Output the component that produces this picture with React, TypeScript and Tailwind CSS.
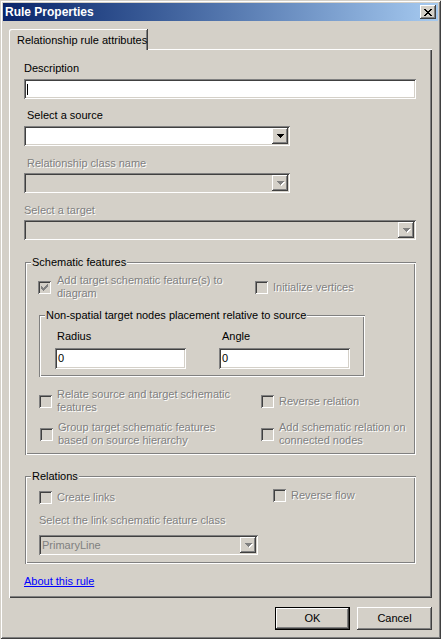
import React from "react";

const raised =
  "shadow-[inset_-1px_-1px_#404040,inset_1px_1px_#fff,inset_-2px_-2px_#808080,inset_2px_2px_#d4d0c8]";
const sunken =
  "shadow-[inset_1px_1px_#808080,inset_-1px_-1px_#fff,inset_2px_2px_#404040,inset_-2px_-2px_#d4d0c8]";
const etched =
  "shadow-[inset_1px_1px_#808080,inset_-1px_-1px_#fff,inset_2px_2px_#fff,inset_-2px_-2px_#808080]";
const dim = "text-[#808080] [text-shadow:1px_1px_0_#fff]";

function Arrow({ disabled }: { disabled?: boolean }) {
  const d = "M0 0h7v1h-1v1h-1v1h-1v1h-1v-1h-1v-1h-1v-1h-1z";
  return (
    <svg width="8" height="5" viewBox="0 0 8 5" shapeRendering="crispEdges">
      {disabled && <path d={d} fill="#fff" transform="translate(1 1)" />}
      <path d={d} fill={disabled ? "#808080" : "#000"} />
    </svg>
  );
}

function Select({
  width,
  disabled,
  value,
}: {
  width: string;
  disabled?: boolean;
  value?: string;
}) {
  return (
    <div
      className={`${width} h-[20px] flex items-center ${sunken} ${
        disabled ? "bg-[#d4d0c8]" : "bg-white"
      }`}
    >
      <span className="flex-1 pl-[3px] text-[#808080]">{value}</span>
      <div
        className={`w-[16px] h-[16px] m-[2px] bg-[#d4d0c8] flex items-center justify-center pl-[1px] ${raised}`}
      >
        <Arrow disabled={disabled} />
      </div>
    </div>
  );
}

function CheckBox({ checked }: { checked?: boolean }) {
  return (
    <div className={`w-[13px] h-[13px] shrink-0 bg-[#d4d0c8] flex items-center justify-center ${sunken}`}>
      {checked && (
        <svg width="7" height="7" viewBox="0 0 7 7" shapeRendering="crispEdges">
          <path
            d="M6 0h1v3h-1v1h-1v1h-1v1h-1v1h-1v-1h-1v-1h-1v-3h1v1h1v1h1v-1h1v-1h1v-1h1z"
            fill="#808080"
          />
        </svg>
      )}
    </div>
  );
}

function Check({
  label,
  checked,
  gap,
  textWidth,
}: {
  label: string;
  checked?: boolean;
  gap: string;
  textWidth?: string;
}) {
  return (
    <div className={`flex items-center ${gap}`}>
      <CheckBox checked={checked} />
      <span className={`${dim} ${textWidth ?? ""}`}>{label}</span>
    </div>
  );
}

function Group({
  title,
  className,
  children,
}: {
  title: string;
  className: string;
  children: React.ReactNode;
}) {
  return (
    <div className={`relative ${etched} ${className}`}>
      <span className="absolute left-[6px] -top-[6px] px-[1px] bg-[#d4d0c8]">{title}</span>
      {children}
    </div>
  );
}

function CloseButton() {
  return (
    <div className={`w-[16px] h-[14px] bg-[#d4d0c8] flex items-center justify-center ${raised}`}>
      <svg width="8" height="7" viewBox="0 0 8 7" shapeRendering="crispEdges">
        <path
          d="M0 0h2v1h-2zM6 0h2v1h-2zM1 1h2v1h-2zM5 1h2v1h-2zM2 2h4v1h-4zM3 3h2v1h-2zM2 4h4v1h-4zM1 5h2v1h-2zM5 5h2v1h-2zM0 6h2v1h-2zM6 6h2v1h-2z"
          fill="#000"
        />
      </svg>
    </div>
  );
}

export default function App() {
  return (
    <div
      className={`w-[441px] h-[639px] bg-[#d4d0c8] p-[3px] flex flex-col font-['Liberation_Sans',Arial,sans-serif] text-[11px] leading-[13px] text-black shadow-[inset_1px_1px_#d4d0c8,inset_-1px_-1px_#404040,inset_2px_2px_#fff,inset_-2px_-2px_#808080]`}
    >
      {/* Title bar */}
      <div className="h-[18px] flex items-center justify-between pl-[2px] pr-[2px] bg-linear-to-r from-[#0a246a] to-[#a6caf0]">
        <span className="text-white font-bold text-[12px]">Rule Properties</span>
        <CloseButton />
      </div>

      <div className="flex flex-col pl-[6px] pr-[6px] pt-[8px]">
        {/* Tab */}
        <div className="relative z-10 -mb-px w-[139px] h-[21px] pl-[8px] pt-[5px] bg-[#d4d0c8] rounded-tl-[2px] shadow-[inset_-1px_0_#404040,inset_1px_1px_#fff,inset_-2px_0_#808080]">
          Relationship rule attributes
        </div>

        {/* Panel */}
        <div className="h-[549px] flex flex-col pl-[15px] pr-[16px] pt-[13px] shadow-[inset_1px_1px_#fff,inset_-1px_-1px_#404040,inset_-2px_-2px_#808080]">
          <span>Description</span>
          <div className={`mt-[4px] h-[20px] bg-white flex items-center pl-[3px] ${sunken}`}>
            <span className="w-px h-[11px] bg-black" />
          </div>

          <span className="mt-[10px] pl-[3px]">Select a source</span>
          <div className="mt-[4px]">
            <Select width="w-[266px]" />
          </div>

          <span className={`mt-[11px] pl-[3px] ${dim}`}>Relationship class name</span>
          <div className="mt-[3px]">
            <Select width="w-[266px]" disabled />
          </div>

          <span className={`mt-[11px] ${dim}`}>Select a target</span>
          <div className="mt-[3px]">
            <Select width="w-full" disabled />
          </div>

          {/* Schematic features */}
          <Group title="Schematic features" className="mt-[22px] ml-px w-[391px] pt-[12px] pb-[8px] flex flex-col">
            <div className="flex items-center pl-[13px] h-[26px]">
              <div className="w-[217px]">
                <Check
                  checked
                  gap="gap-[6px]"
                  textWidth="w-[180px]"
                  label="Add target schematic feature(s) to diagram"
                />
              </div>
              <Check gap="gap-[5px]" label="Initialize vertices" />
            </div>

            <Group
              title="Non-spatial target nodes placement relative to source"
              className="mt-[15px] ml-[14px] w-[326px] pt-[15px] pl-[16px] pb-[8px] flex gap-[33px]"
            >
              <div className="flex flex-col w-[131px]">
                <span className="pl-[2px]">Radius</span>
                <div className={`mt-[5px] h-[21px] bg-white flex items-center pl-[3px] ${sunken}`}>0</div>
              </div>
              <div className="flex flex-col w-[131px]">
                <span className="pl-[3px]">Angle</span>
                <div className={`mt-[5px] h-[21px] bg-white flex items-center pl-[3px] ${sunken}`}>0</div>
              </div>
            </Group>

            <div className="mt-[11px] flex items-center pl-[14px] h-[26px]">
              <div className="w-[222px]">
                <Check gap="gap-[5px]" textWidth="w-[180px]" label="Relate source and target schematic features" />
              </div>
              <Check gap="gap-[5px]" label="Reverse relation" />
            </div>

            <div className="mt-[7px] flex items-center pl-[15px] h-[26px]">
              <div className="w-[221px]">
                <Check
                  gap="gap-[5px]"
                  textWidth="w-[180px]"
                  label="Group target schematic features based on source hierarchy"
                />
              </div>
              <Check gap="gap-[5px]" textWidth="w-[130px]" label="Add schematic relation on connected nodes" />
            </div>
          </Group>

          {/* Relations */}
          <Group title="Relations" className="mt-[21px] ml-px w-[391px] pt-[15px] pl-[14px] pb-[9px] flex flex-col">
            <div className="flex items-center h-[13px]">
              <div className="w-[234px]">
                <Check gap="gap-[5px]" label="Create links" />
              </div>
              <div className="-mt-[4px]">
                <Check gap="gap-[5px]" label="Reverse flow" />
              </div>
            </div>
            <span className={`mt-[10px] ${dim}`}>Select the link schematic feature class</span>
            <div className="mt-[8px]">
              <Select width="w-[219px]" disabled value="PrimaryLine" />
            </div>
          </Group>

          <a href="#" className="mt-[11px] self-start text-[#0000ff] underline">
            About this rule
          </a>
        </div>

        {/* Buttons */}
        <div className="mt-[9px] flex justify-end gap-[7px]">
          <button className={`w-[75px] h-[23px] border border-black bg-[#d4d0c8] ${raised}`}>OK</button>
          <button className={`w-[75px] h-[23px] bg-[#d4d0c8] ${raised}`}>Cancel</button>
        </div>
      </div>
    </div>
  );
}
